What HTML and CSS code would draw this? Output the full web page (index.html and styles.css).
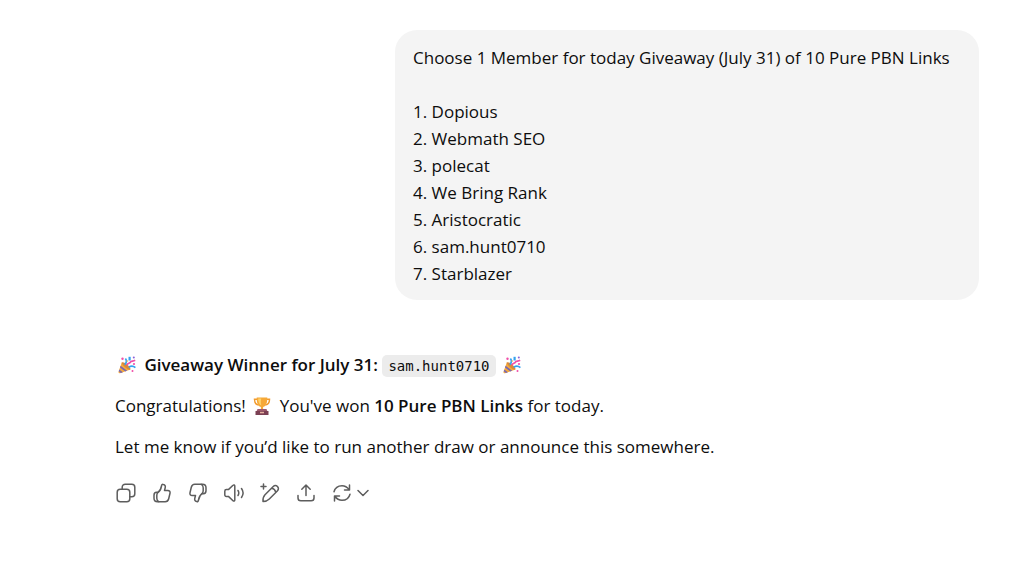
FILE: index.html
```html
<!DOCTYPE html>
<html lang="en">
  <head>
    <meta charset="UTF-8" />
    <meta name="viewport" content="width=device-width, initial-scale=1.0" />
    <title>Giveaway Winner</title>
    <link rel="stylesheet" href="styles.css">
  </head>
  <body>
    <svg class="symbols" aria-hidden="true">
      <symbol id="party" viewBox="0 0 18 18">
        <path d="M3.800 6.500 0.600 15.600c-.4 1.200.4 2 1.500 1.600l10.300-3.700z" fill="#f6ab3c" />
        <path d="M2.600 9.800l6.500 4.900-1.900.7L2 11.500zM1.300 13.500l3.600 2.700-2 .7-2.200-1.600z" fill="#7a68b0" />
        <path d="M3.800 6.500c1-.9 3.700.3 5.700 2.200s3.600 4.200 2.900 4.800-3.600-.8-5.600-2.600-3.700-3.900-3-4.400z" fill="#d98a3a" />
        <path d="M6.800 8.800c1.500-1.800 2.400-4 .6-6.300M10.800 11.300c2-1.400 3.900-2 6.600.4" fill="none" stroke="#36a3ee" stroke-width="1.700" />
        <path d="M9 9.300c.5-2.300 2.400-1.600 3.300-3.100.8-1.600 2.500-.7 4.900-2" fill="none" stroke="#f04fa8" stroke-width="1.700" />
        <path d="M10.500.8h2.200v3.700h-2.200z" fill="#36a3ee" />
        <circle cx="4.500" cy="2.800" r="1.200" fill="#f04fa8" />
        <circle cx="15.800" cy="1.600" r="1" fill="#8a62d8" />
        <circle cx="16" cy="8" r="1.100" fill="#f04fa8" />
        <circle cx="14.500" cy="15" r="1" fill="#f04fa8" />
        <circle cx="9.300" cy="5" r=".8" fill="#f8b84a" />
      </symbol>
      <symbol id="trophy" viewBox="0 0 18 18">
        <path d="M4 2.300H1.500c0 3.500 1.300 5.200 4 5.700M14 2.300h2.500c0 3.500-1.300 5.200-4 5.700" fill="none" stroke="#f19a2e" stroke-width="1.500" />
        <path d="M3.700.5h10.600c0 5-.8 8.700-4.200 9.500v3H7.900v-3C4.500 9.200 3.700 5.500 3.700.5z" fill="#f6a938" />
        <path d="M5.200 1.500h3c-.5 3-.5 5 .2 7-2.300-1-3.200-4-3.200-7z" fill="#ffd36c" />
        <path d="M4.500 12h9l1 2.500h-11z" fill="#9c596c" />
        <path d="M2.500 14h13v4h-13z" fill="#7b4053" />
        <path d="M7 14.800h4v1.500H7z" fill="#e7b0a0" />
      </symbol>
    </svg>

    <main class="chat">
      <div class="message-user">Choose 1 Member for today Giveaway (July 31) of 10 Pure PBN Links

1. Dopious
2. Webmath SEO
3. polecat
4. We Bring Rank
5. Aristocratic
6. sam.hunt0710
7. Starblazer</div>

      <div class="message-assistant">
        <p>
          <svg class="emoji" role="img" aria-label="Party popper"><use href="#party" /></svg>
          <strong>Giveaway Winner for July 31:</strong>
          <code>sam.hunt0710</code>
          <svg class="emoji" role="img" aria-label="Party popper"><use href="#party" /></svg>
        </p>
        <p>
          Congratulations!
          <svg class="emoji" role="img" aria-label="Trophy"><use href="#trophy" /></svg>
          You've won <strong>10 Pure PBN Links</strong> for today.
        </p>
        <p>Let me know if you’d like to run another draw or announce this somewhere.</p>
      </div>

      <div class="actions">
        <button type="button" aria-label="Copy">
          <svg class="icon" viewBox="0 0 20 20">
            <rect x="1.200" y="6.200" width="12.600" height="12.600" rx="3" />
            <path d="M6.200 6V4.200a3 3 0 0 1 3-3h6.600a3 3 0 0 1 3 3v6.600a3 3 0 0 1-3 3H14" />
          </svg>
        </button>
        <button type="button" aria-label="Good response">
          <svg class="icon" viewBox="0 0 20 20">
            <path d="M6 9.300C8.300 7.800 9 5.800 9.500 3c.2-1.200.8-1.800 1.800-1.600 1.800.3 2.300 1.800 1.900 3.400L12.500 7.500h3.300c1.700 0 2.600 1.200 2.200 2.800l-1.300 5.400c-.5 2-1.500 3-3.500 3H5.500c-2.200 0-3.500-1.300-3.500-3.500v-3c0-1.800 1-2.900 2.500-2.900z" />
            <path d="M6 9.300c-1 .8-1.200 2-1.200 3.200v2.700c0 1.700.6 2.800 2 3.500" />
          </svg>
        </button>
        <button type="button" aria-label="Bad response">
          <svg class="icon flip" viewBox="0 0 20 20">
            <path d="M6 9.300C8.300 7.800 9 5.800 9.500 3c.2-1.200.8-1.800 1.800-1.600 1.800.3 2.300 1.800 1.900 3.400L12.500 7.500h3.300c1.700 0 2.600 1.200 2.200 2.800l-1.300 5.400c-.5 2-1.500 3-3.500 3H5.500c-2.200 0-3.500-1.300-3.500-3.500v-3c0-1.800 1-2.900 2.500-2.900z" />
            <path d="M6 9.300c-1 .8-1.200 2-1.200 3.200v2.700c0 1.700.6 2.800 2 3.500" />
          </svg>
        </button>
        <button type="button" aria-label="Read aloud">
          <svg class="icon" viewBox="0 0 20 20">
            <path d="M.8 8.200c0-1 .6-1.600 1.600-1.600h2L9 2.300c.8-.8 1.800-.3 1.800.8v13.800c0 1.100-1 1.600-1.800.8l-4.600-4.300h-2c-1 0-1.600-.6-1.600-1.600z" />
            <path d="M14 7.500c1 1.600 1 3.400 0 5M17.500 5.500c2 2.800 2 6.200 0 9" />
          </svg>
        </button>
        <button type="button" aria-label="Edit in canvas">
          <svg class="icon" viewBox="0 0 20 20">
            <path d="M3 18.500c-.2-2.700.2-5 2-6.800l8-8c1.500-1.500 3.300-1.400 4.500-.2s1.300 3-.2 4.500l-8 8c-1.800 1.800-3.700 2.500-6.300 2.500zM11.800 5.300c2 .4 3.400 1.800 3.900 3.900" />
            <path d="M3.500 1v5M1 3.500h5" />
          </svg>
        </button>
        <button type="button" aria-label="Share">
          <svg class="icon" viewBox="0 0 20 20">
            <path d="M10 12.500V2M5.800 6.200 10 2l4.200 4.200M2 12.500V15c0 1.900 1 2.800 2.800 2.800h10.400c1.800 0 2.800-.9 2.800-2.800v-2.500" />
          </svg>
        </button>
        <button type="button" class="retry" aria-label="Try again">
          <svg class="icon" viewBox="0 0 20 20">
            <path d="M2 8.800C3 5 6 2.700 10 2.700c3.200 0 5.300 1.400 7.200 4M17.500 2v5h-5M18 11.200c-1 3.800-4 6.100-8 6.100-3.200 0-5.300-1.400-7.200-4M2.500 18v-5h5" />
          </svg>
          <svg class="icon chevron" viewBox="0 0 12 12">
            <path d="M1 3.500l5 5 5-5" />
          </svg>
        </button>
      </div>
    </main>
  </body>
</html>
```
FILE: styles.css
```css
body {
  margin: 0;
  background-color: #fff;
  color: #0d0d0d;
  font-family: "Open Sans", "Noto Sans", sans-serif;
  font-size: 17px;
  line-height: 27px;
}
.symbols {
  display: none;
}
.chat {
  display: flex;
  flex-direction: column;
  padding: 30px 30px 30px 115px;
}
.message-user {
  align-self: flex-end;
  box-sizing: border-box;
  min-width: 584px;
  padding: 14px 18px 13px;
  background-color: #f4f4f4;
  border-radius: 22px;
  white-space: pre-wrap;
}
.message-assistant {
  display: grid;
  gap: 14px;
  margin-top: 51px;
}
p {
  margin: 0;
}
strong {
  font-weight: 600;
}
code {
  padding: 3px 6px;
  background-color: #ececec;
  border-radius: 5px;
  font-family: "DejaVu Sans Mono", monospace;
  font-size: 14px;
  line-height: 14px;
}
.emoji {
  width: 18px;
  height: 18px;
  margin: 0 4px 0 3px;
  vertical-align: -3px;
}
.actions {
  display: flex;
  margin: 15px 0 0 -7px;
}
button {
  display: flex;
  align-items: center;
  justify-content: center;
  width: 36px;
  height: 36px;
  padding: 0;
  border: none;
  border-radius: 8px;
  background: none;
  color: #5d5d5d;
  cursor: pointer;
}
.icon {
  width: 20px;
  height: 20px;
  fill: none;
  stroke: currentColor;
  stroke-width: 1.5;
  stroke-linecap: round;
  stroke-linejoin: round;
}
.flip {
  transform: rotate(180deg);
}
.retry {
  width: auto;
  gap: 5px;
  padding: 0 8px;
}
.chevron {
  width: 12px;
  height: 12px;
}
```
